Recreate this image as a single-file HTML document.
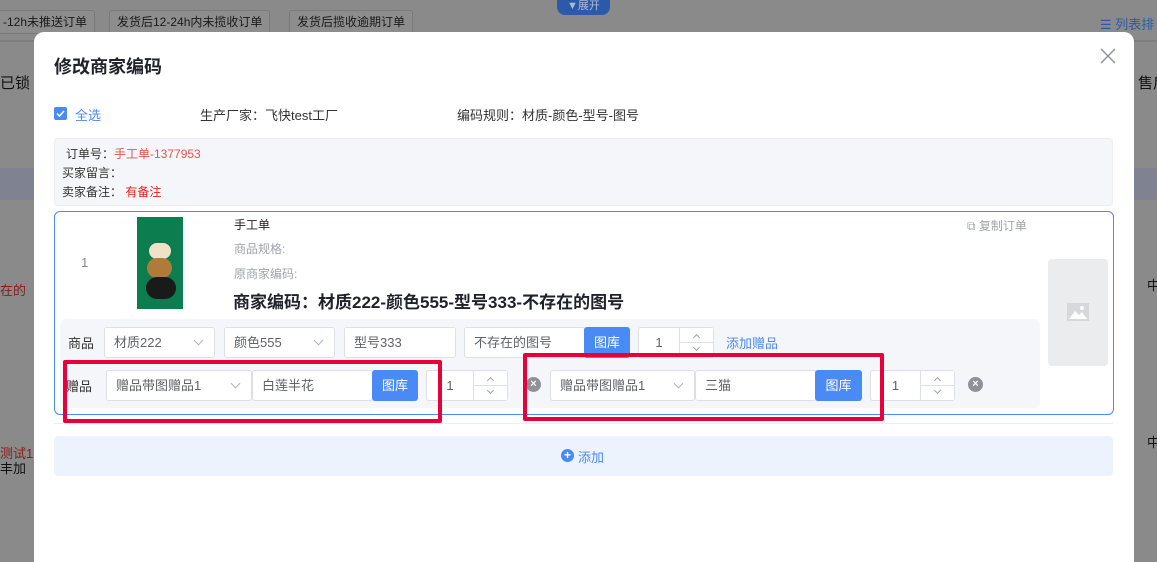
<!DOCTYPE html>
<html><head><meta charset="utf-8"><style>
*{box-sizing:border-box;margin:0;padding:0}
html,body{background:#8a8a8a}
body{width:1157px;height:554px;overflow:hidden;font-family:"Liberation Sans","Noto Sans CJK SC",sans-serif;position:relative;font-size:13px;color:#333}
.a{position:absolute;white-space:nowrap}
.bg-btn{position:absolute;top:10px;height:24px;border:1px solid #7a7a7a;border-radius:3px;background:#8d8d8d;color:#1a1a1a;font-size:12px;line-height:22px;padding:0 7px}
.sel,.inp,.num{position:absolute;height:31px;background:#fff;border:1px solid #dcdfe6;border-radius:3px;color:#606266;font-size:13px;line-height:29px;padding-left:9px}
.sel:after{content:"";position:absolute;right:12px;top:9px;width:6px;height:6px;border-right:1px solid #b0b3b8;border-bottom:1px solid #b0b3b8;transform:rotate(45deg)}
.btn{position:absolute;height:31px;background:#4a8af4;color:#fff;border-radius:3px;font-size:13px;line-height:31px;text-align:center}
.num{text-align:center;padding-left:0}
.num .sp{position:absolute;right:0;top:0;width:34px;height:29px;border-left:1px solid #dcdfe6;background:#fff}
.num .sp:before{content:"";position:absolute;left:0;right:0;top:14px;border-top:1px solid #dcdfe6}
.num .sp i{position:absolute;left:14px;width:5px;height:5px;border-left:1px solid #a0a3a8;border-top:1px solid #a0a3a8}
.num .t{width:calc(100% - 34px)}
.x{position:absolute;width:15px;height:15px;border-radius:50%;background:#8e9196;color:#fff;font-size:11px;line-height:15px;text-align:center;font-weight:bold}
.red{position:absolute;border:4px solid #e8003a;border-radius:2px}
</style></head><body>
<div class="a" style="left:0;top:0;width:1157px;height:554px;background:#8a8a8a"></div>
<div class="a" style="left:0;top:40px;width:1157px;height:2px;background:#7d7d7d"></div>
<div class="bg-btn" style="left:-5px">-12h未推送订单</div>
<div class="bg-btn" style="left:109px">发货后12-24h内未揽收订单</div>
<div class="bg-btn" style="left:289px">发货后揽收逾期订单</div>
<div class="a" style="left:557px;top:0;width:53px;height:15px;background:#2c5aa8;border-radius:0 0 8px 8px;color:#aabbd8;font-size:11px;line-height:13px;text-align:center">▼展开</div>
<div class="a" style="left:1100px;top:14px;color:#2c5aa8;font-size:13px">☰ 列表排</div>
<div class="a" style="left:0;top:72px;color:#111;font-size:15px">已锁</div>
<div class="a" style="left:1138px;top:72px;color:#111;font-size:15px">售后</div>
<div class="a" style="left:0;top:168px;width:1157px;height:32px;background:#7f8290"></div>
<div class="a" style="left:0;top:280px;color:#8b1a1a;font-size:13px">在的</div>
<div class="a" style="left:0;top:443px;color:#8b1a1a;font-size:13px">测试1</div>
<div class="a" style="left:0;top:458px;color:#111;font-size:13px">丰加</div>
<div class="a" style="left:1147px;top:432px;color:#111;font-size:13px">中</div>
<div class="a" style="left:1147px;top:275px;color:#111;font-size:13px">中</div>
<!-- modal -->
<div class="a" style="left:34px;top:32px;width:1100px;height:530px;background:#fff;border-radius:10px 10px 0 0"></div>
<div class="a" style="left:54px;top:53px;font-size:18px;font-weight:bold;color:#1f2329">修改商家编码</div>
<svg class="a" style="left:1100px;top:48px" width="16" height="16"><path d="M1 1L15 15M15 1L1 15" stroke="#909399" stroke-width="1.5"/></svg>
<div class="a" style="left:54px;top:107px;width:13px;height:13px;background:#4a8af4;border-radius:2px"><svg width="13" height="13"><path d="M3 6.5L5.5 9L10 4" stroke="#fff" stroke-width="1.5" fill="none"/></svg></div>
<div class="a" style="left:75px;top:105px;color:#4a8af4">全选</div>
<div class="a" style="left:200px;top:105px;color:#333">生产厂家：飞快test工厂</div>
<div class="a" style="left:457px;top:105px;color:#333">编码规则：材质-颜色-型号-图号</div>
<div class="a" style="left:54px;top:138px;width:1059px;height:68px;background:#f5f6f9;border:1px solid #eceef2;border-radius:4px"></div>
<div class="a" style="left:66px;top:145px;font-size:12px;color:#333">订单号：<span style="color:#e5534b">手工单-1377953</span></div>
<div class="a" style="left:62px;top:164px;font-size:12px;color:#333">买家留言：</div>
<div class="a" style="left:62px;top:183px;font-size:12px;color:#333">卖家备注： <span style="color:#e0201c">有备注</span></div>
<div class="a" style="left:54px;top:211px;width:1060px;height:204px;border:1px solid #4a8af4;border-radius:6px"></div>
<div class="a" style="left:81px;top:255px;color:#888">1</div>
<div class="a" style="left:137px;top:217px;width:46px;height:92px;background:#0b7d4e"></div>
<div class="a" style="left:149px;top:243px;width:22px;height:16px;background:#efe2c8;border-radius:8px"></div>
<div class="a" style="left:147px;top:258px;width:25px;height:20px;background:#b07a3a;border-radius:10px"></div>
<div class="a" style="left:146px;top:277px;width:30px;height:22px;background:#1a1a1a;border-radius:11px"></div>
<div class="a" style="left:234px;top:216px;font-size:12px;color:#222">手工单</div>
<div class="a" style="left:234px;top:240px;font-size:12px;color:#a0a3a8">商品规格:</div>
<div class="a" style="left:234px;top:265px;font-size:12px;color:#a0a3a8">原商家编码:</div>
<div class="a" style="left:233px;top:288px;font-size:17px;font-weight:bold;color:#1f2329">商家编码：材质222-颜色555-型号333-不存在的图号</div>
<div class="a" style="left:967px;top:217px;font-size:12px;color:#a0a3a8">⧉ 复制订单</div>
<div class="a" style="left:1048px;top:259px;width:60px;height:107px;background:#ebecee;border-radius:4px"></div>
<svg class="a" style="left:1067px;top:303px" width="22" height="18"><rect width="22" height="18" fill="#d6d8dc"/><path d="M2 16L8 8L12 12L15 9L20 16Z" fill="#fff"/><circle cx="15" cy="5" r="2" fill="#fff"/></svg>
<div class="a" style="left:60px;top:319px;width:980px;height:89px;background:#f5f6f9;border-radius:6px"></div>
<div class="a" style="left:68px;top:333px;color:#333">商品</div>
<div class="sel" style="left:104px;top:327px;width:111px">材质222</div>
<div class="sel" style="left:224px;top:327px;width:111px">颜色555</div>
<div class="inp" style="left:344px;top:327px;width:112px">型号333</div>
<div class="inp" style="left:464px;top:327px;width:122px">不存在的图号</div>
<div class="btn" style="left:584px;top:327px;width:46px">图库</div>
<div class="num" style="left:638px;top:327px;width:76px"><div class="t">1</div><div class="sp"><i style="top:7px;transform:rotate(45deg)"></i><i style="top:17px;transform:rotate(225deg)"></i></div></div>
<div class="a" style="left:726px;top:333px;color:#4a8af4">添加赠品</div>
<div class="a" style="left:66px;top:376px;color:#333">赠品</div>
<div class="sel" style="left:106px;top:370px;width:146px">赠品带图赠品1</div>
<div class="inp" style="left:252px;top:370px;width:122px">白莲半花</div>
<div class="btn" style="left:372px;top:370px;width:46px">图库</div>
<div class="num" style="left:426px;top:370px;width:82px"><div class="t">1</div><div class="sp"><i style="top:7px;transform:rotate(45deg)"></i><i style="top:17px;transform:rotate(225deg)"></i></div></div>
<div class="x" style="left:526px;top:377px">×</div>
<div class="sel" style="left:550px;top:370px;width:145px">赠品带图赠品1</div>
<div class="inp" style="left:695px;top:370px;width:122px">三猫</div>
<div class="btn" style="left:815px;top:370px;width:47px">图库</div>
<div class="num" style="left:870px;top:370px;width:85px"><div class="t">1</div><div class="sp"><i style="top:7px;transform:rotate(45deg)"></i><i style="top:17px;transform:rotate(225deg)"></i></div></div>
<div class="x" style="left:968px;top:377px">×</div>
<div class="red" style="left:63px;top:360px;width:379px;height:63px"></div>
<div class="red" style="left:523px;top:353px;width:361px;height:68px"></div>
<div class="a" style="left:54px;top:423px;width:1059px;height:1px;background:#ebedf0"></div>
<div class="a" style="left:54px;top:436px;width:1059px;height:40px;background:#edf3fd;border-radius:4px"></div>
<div class="a" style="left:561px;top:449px;width:13px;height:13px;border-radius:50%;background:#4a8af4;color:#fff;font-size:12px;line-height:12px;text-align:center;font-weight:bold">+</div>
<div class="a" style="left:578px;top:447px;color:#4a8af4">添加</div>
</body></html>
